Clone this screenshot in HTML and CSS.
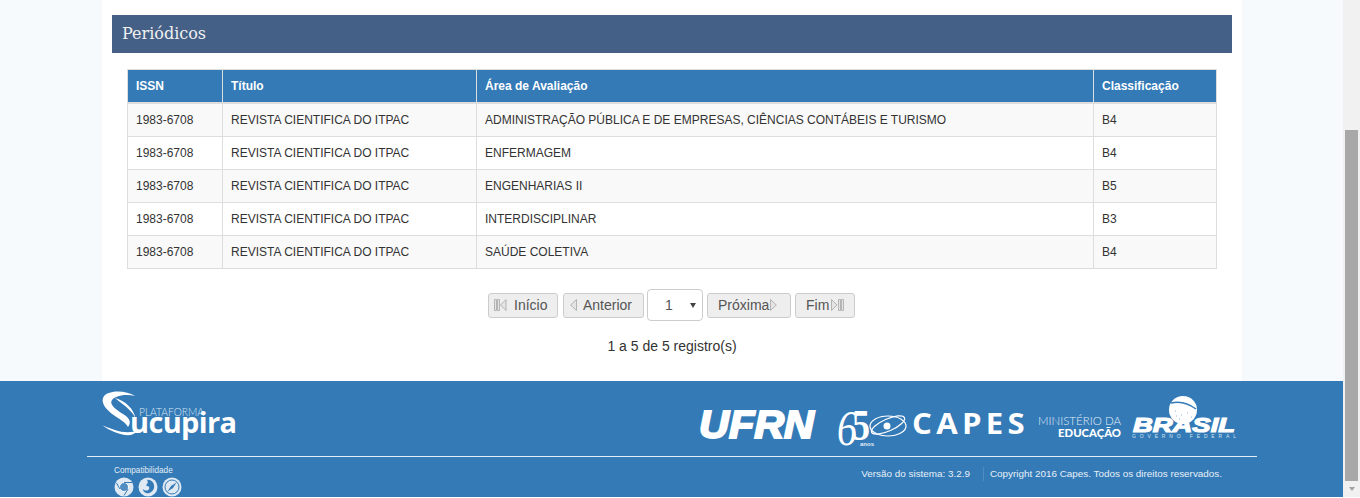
FILE: index.html
```html
<!DOCTYPE html>
<html lang="pt-BR">
<head>
<meta charset="utf-8">
<title>Periódicos</title>
<link rel="stylesheet" href="styles.css">
</head>
<body>
<div class="app">
  <div class="page">
    <main class="panel">
      <h2 class="heading">Periódicos</h2>
      <div class="table-wrap">
        <table class="grid">
          <colgroup><col class="c1"><col class="c2"><col class="c3"><col class="c4"></colgroup>
          <thead><tr><th>ISSN</th><th>Título</th><th>Área de Avaliação</th><th>Classificação</th></tr></thead>
          <tbody>
            <tr><td>1983-6708</td><td>REVISTA CIENTIFICA DO ITPAC</td><td>ADMINISTRAÇÃO PÚBLICA E DE EMPRESAS, CIÊNCIAS CONTÁBEIS E TURISMO</td><td>B4</td></tr>
            <tr><td>1983-6708</td><td>REVISTA CIENTIFICA DO ITPAC</td><td>ENFERMAGEM</td><td>B4</td></tr>
            <tr><td>1983-6708</td><td>REVISTA CIENTIFICA DO ITPAC</td><td>ENGENHARIAS II</td><td>B5</td></tr>
            <tr><td>1983-6708</td><td>REVISTA CIENTIFICA DO ITPAC</td><td>INTERDISCIPLINAR</td><td>B3</td></tr>
            <tr><td>1983-6708</td><td>REVISTA CIENTIFICA DO ITPAC</td><td>SAÚDE COLETIVA</td><td>B4</td></tr>
          </tbody>
        </table>
      </div>
      <nav class="pager">
        <a class="btn b-first"><svg class="ico-w" viewBox="0 0 13 12"><path class="ic" d="M.5.5h2v11h-2zM3.5.5h2v11h-2zM12 .5v11L6.500 6z"/></svg><span>Início</span></a>
        <a class="btn b-prev"><svg class="ico-n" viewBox="0 0 7 12"><path class="ic" d="M6.500.5v11L.7 6z"/></svg><span>Anterior</span></a>
        <div class="select"><span class="sel-val">1</span><span class="sel-arrow"></span></div>
        <a class="btn b-next"><span>Próxima</span><svg class="ico-n" viewBox="0 0 7 12"><path class="ic" d="M.5.5v11L6.300 6z"/></svg></a>
        <a class="btn b-last"><span>Fim</span><svg class="ico-w" viewBox="0 0 13 12"><path class="ic" d="M.5.500v11L6 6zM7.500.5h2v11h-2zM10.500.5h2v11h-2z"/></svg></a>
      </nav>
      <p class="count">1 a 5 de 5 registro(s)</p>
    </main>
    <footer class="footer">
      <div class="foot-inner">
        <div class="logos">
          <svg class="logo-sucupira" viewBox="0 0 137 50" aria-label="Plataforma Sucupira">
            <path class="w" d="M34 7C25 1 8 1 3 7-1 13 4 20 14 27c6 4 11 7 13 11 3-4 3-8-5-13C14 20 8 15 11 11c4-5 15-6 23-4z"/>
            <path class="w" d="M14 9c10 3 19 10 21 22-2-8-11-14-21-22z"/>
            <path class="w" d="M1 36c8 6 19 11 29 10 3-1 6-3 7-5-5 3-15 3-23 0C8 39 3 37 1 36z"/>
            <text class="sc-thin" x="38" y="27" textLength="65" lengthAdjust="spacingAndGlyphs">PLATAFORMA</text>
            <text class="sc-bold" x="29" y="44" textLength="107" lengthAdjust="spacing">ucupira</text>
          </svg>
          <div class="logos-right">
            <svg class="logo-ufrn" viewBox="0 0 117 30" aria-label="UFRN"><text class="uf" x="1" y="28" textLength="115" lengthAdjust="spacingAndGlyphs">UFRN</text></svg>
            <svg class="logo-capes" viewBox="0 0 190 42" aria-label="65 anos CAPES">
              <text class="c65a" x="1" y="38" textLength="20" lengthAdjust="spacingAndGlyphs">6</text>
              <text class="c65b" x="16" y="33" textLength="18" lengthAdjust="spacingAndGlyphs">5</text>
              <text class="anos" x="24" y="39">anos</text>
              <g class="orbit"><ellipse cx="52" cy="19" rx="18" ry="10"/><ellipse cx="52" cy="18" rx="18" ry="6" transform="rotate(-24 52 18)"/></g>
              <circle class="w" cx="51" cy="19" r="3.500"/>
              <text class="capes" x="76" y="27" textLength="117" lengthAdjust="spacingAndGlyphs">CAPES</text>
            </svg>
            <div class="mec"><span class="mec-top">MINISTÉRIO DA</span><span class="mec-bot">EDUCAÇÃO</span></div>
            <svg class="logo-brasil" viewBox="0 0 106 44" aria-label="Brasil Governo Federal">
              <circle class="w" cx="52" cy="15" r="14"/>
              <path class="band" d="M40 8c8-2 17 0 25 6"/>
              <path class="specks" d="M44 16h1M50 20h1M56 18h1M48 24h1M55 25h1M60 22h1M45 21h1"/>
              <text class="br" x="2" y="37" textLength="102" lengthAdjust="spacingAndGlyphs">BRASIL</text>
              <text class="gov" x="1" y="43" textLength="104" lengthAdjust="spacing">GOVERNO FEDERAL</text>
            </svg>
          </div>
        </div>
        <div class="foot-bottom">
          <div class="compat">
            <span class="compat-label">Compatibilidade</span>
            <div class="browsers">
              <svg class="browser" viewBox="0 0 20 20" aria-label="Chrome"><circle class="l" cx="10" cy="10" r="9.500"/><circle class="bb" cx="10" cy="10" r="4.500"/><path class="bs" d="M10 5.500h8M6 12 2.500 6M14 12 10 18.500"/></svg>
              <svg class="browser" viewBox="0 0 20 20" aria-label="Firefox"><circle class="l" cx="10" cy="10" r="9.500"/><path class="bf" d="M9 3c4-1 8 3 7 8-1 4-5 6-8 5-2-1-3-2-3-4 2 2 5 2 6 0 1-1 0-3-2-3-1 0-1-1 0-2 1-1 1-3 0-4z"/></svg>
              <svg class="browser" viewBox="0 0 20 20" aria-label="Safari"><circle class="l" cx="10" cy="10" r="9.500"/><circle class="bs" cx="10" cy="10" r="7"/><path class="bf" d="M14.500 5.500 11 11 9 9zM5.500 14.500 9 9l2 2z"/></svg>
            </div>
          </div>
          <div class="legal">
            <span class="ver">Versão do sistema: 3.2.9</span>
            <span class="copy">Copyright 2016 Capes. Todos os direitos reservados.</span>
          </div>
        </div>
      </div>
    </footer>
  </div>
  <aside class="scrollbar">
    <div class="thumb-space"></div>
    <div class="thumb"></div>
    <div class="arrow-down"></div>
  </aside>
</div>
</body>
</html>
```
FILE: styles.css
```css
* { box-sizing: border-box; }
html, body { margin: 0; height: 498px; overflow: hidden; background: #fff; }
body { font-family: "Liberation Sans", Arial, sans-serif; color: #333; }
svg { overflow: visible; }
.app { display: flex; height: 498px; }
.page { width: 1343px; height: 497px; display: flex; flex-direction: column; background: #f6fafd; }
.panel { width: 1140px; height: 381px; margin-left: 102px; padding: 15px 10px 0; background: #fff; }
.heading {
  margin: 0; height: 38px; padding-left: 10px; background: #456087; color: #f1f1f1;
  font: 400 16px/38px "DejaVu Serif", serif;
}
.table-wrap { padding: 16px 15px 0; }
.grid { width: 1089px; table-layout: fixed; border-collapse: collapse; font-size: 12px; line-height: 16px; }
.c1 { width: 95px; } .c2 { width: 254px; } .c3 { width: 617px; } .c4 { width: 123px; }
.grid th, .grid td { border: 1px solid #ddd; padding: 8px; text-align: left; }
.grid th { background: #337ab7; color: #fff; font-weight: 700; border-bottom-width: 2px; }
.grid tbody tr:nth-child(odd) td { background: #f9f9f9; }
.pager { display: flex; align-items: center; margin: 20px 0 0 376px; height: 32px; color: #555; font-size: 14px; }
.btn {
  display: flex; align-items: center; height: 25px;
  background: #eee; border: 1px solid #ccc; border-radius: 3px; color: #555;
}
.b-first { width: 70px; gap: 7px; padding-left: 5px; margin-right: 5px; }
.b-prev { width: 81px; gap: 6px; padding-left: 6px; margin-right: 3px; }
.b-next { width: 84px; gap: 1px; padding-left: 10px; margin-left: 4px; margin-right: 4px; }
.b-last { width: 60px; gap: 2px; padding-left: 10px; }
.ico-w { width: 13px; height: 12px; }
.ico-n { width: 7px; height: 12px; }
.ic { fill: #e4e4e4; stroke: #b4b4b4; stroke-width: 1; }
.select {
  display: flex; align-items: center; width: 56px; height: 32px; padding-left: 17px;
  background: #fff; border: 1px solid #ccc; border-radius: 4px;
}
.sel-val { width: 25px; color: #555; }
.sel-arrow { width: 0; height: 0; border-left: 3px solid transparent; border-right: 3px solid transparent; border-top: 5px solid #444; }
.count { margin: 17px 0 0; text-align: center; font-size: 14px; line-height: 16px; }
.footer { flex: 1; background: #337ab7; }
.foot-inner { width: 1170px; margin-left: 87px; }
.logos { display: flex; align-items: flex-start; height: 76px; border-bottom: 1px solid #e6eef5; }
.logo-sucupira { width: 137px; height: 50px; margin: 8px 0 0 14px; flex: none; }
.logos-right { display: flex; align-items: flex-start; margin-left: 460px; }
.logo-ufrn { width: 117px; height: 30px; margin-top: 29px; flex: none; }
.logo-capes { width: 190px; height: 42px; margin: 26px 0 0 21px; flex: none; }
.mec { display: flex; flex-direction: column; align-items: flex-end; width: 84px; margin: 34px 0 0 11px; font-family: Lato, sans-serif; color: #fff; font-size: 11.500px; line-height: 12px; }
.mec-top { font-weight: 300; color: #e4eef7; white-space: nowrap; }
.mec-bot { font-weight: 900; font-size: 11.300px; }
.logo-brasil { width: 106px; height: 44px; margin: 14px 0 0 10px; flex: none; }
.w { fill: #fff; }
.l { fill: #dfe9f3; }
.sc-thin { font: 300 12px Lato, sans-serif; fill: #d6e5f2; }
.sc-bold { font: 700 29px "Open Sans", sans-serif; fill: #fff; }
.uf { font: italic 900 39px "Liberation Sans", sans-serif; fill: #fff; stroke: #fff; stroke-width: 2px; }
.c65a { font: italic 400 50px "Liberation Serif", serif; fill: #fff; }
.c65b { font: 700 44px "Liberation Serif", serif; fill: #fff; }
.anos { font: 700 6px "Liberation Sans", sans-serif; fill: #e6eff7; }
.orbit { fill: none; stroke: #fff; stroke-width: 1.200; }
.capes { font: 700 29px "Open Sans", sans-serif; fill: #fff; letter-spacing: 4px; }
.band { fill: none; stroke: #337ab7; stroke-width: 1.500; }
.specks { fill: none; stroke: #8fb6d8; stroke-width: 1; }
.br { font: italic 900 21px "Liberation Sans", sans-serif; fill: #fff; stroke: #fff; stroke-width: 1.200px; }
.gov { font: 400 5px "Liberation Sans", sans-serif; fill: #d4e3f0; }
.foot-bottom { display: flex; justify-content: space-between; padding: 9px 35px 0 27px; }
.compat { display: flex; flex-direction: column; gap: 1px; }
.compat-label { font-size: 8.200px; line-height: 10px; color: #e2edf6; }
.browsers { display: flex; gap: 4px; }
.browser { width: 20px; height: 20px; }
.bb { fill: #4f8dc2; stroke: #fff; stroke-width: 1; }
.bs { fill: none; stroke: #337ab7; stroke-width: 1; }
.bf { fill: #337ab7; }
.legal { display: flex; align-items: center; font-size: 9.900px; line-height: 14px; color: #e8f0f7; height: 16px; }
.ver { padding-right: 13px; border-right: 1px solid #4f8cc1; }
.copy { padding-left: 6px; }
.scrollbar { width: 17px; height: 497px; background: #f1f1f1; display: flex; flex-direction: column; align-items: center; }
.thumb-space { height: 130px; flex: none; }
.thumb { width: 13px; height: 351px; background: #a8a8a8; flex: none; }
.arrow-down { margin-top: 6px; width: 0; height: 0; border-left: 3.500px solid transparent; border-right: 3.500px solid transparent; border-top: 4px solid #a3a3a3; }
```
